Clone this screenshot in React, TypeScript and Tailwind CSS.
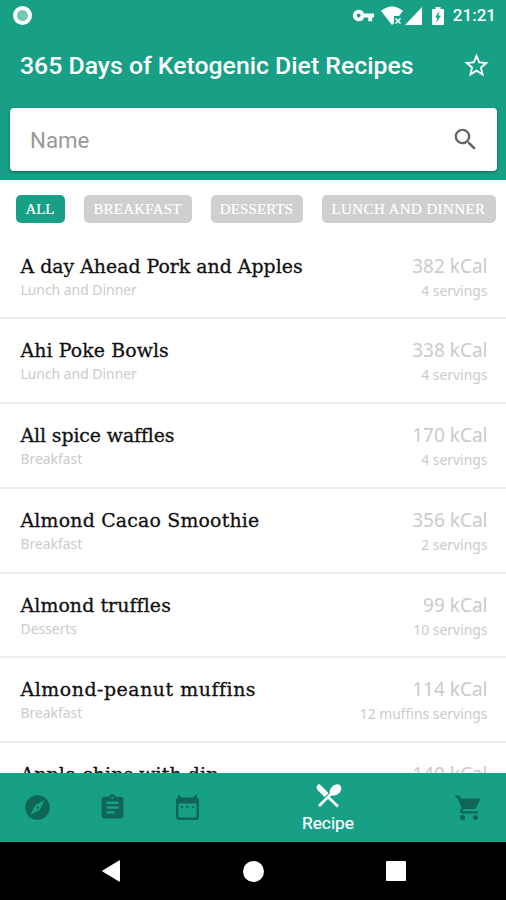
import {
  MdAssignment,
  MdSearch,
  MdStarBorder,
  MdVpnKey,
} from 'react-icons/md';

const categories = [
  { label: 'ALL', className: 'w-[49px] bg-[#17a086] tracking-[-0.1px]' },
  { label: 'BREAKFAST', className: 'w-[108px] bg-[#cfcfcf] tracking-[0.2px]' },
  { label: 'DESSERTS', className: 'w-[92px] bg-[#cfcfcf] tracking-[0.1px]' },
  { label: 'LUNCH AND DINNER', className: 'w-[174px] bg-[#cfcfcf] tracking-[0.4px]' },
];

const recipes = [
  { name: 'A day Ahead Pork and Apples', category: 'Lunch and Dinner', kcal: 382, servings: '4 servings' },
  { name: 'Ahi Poke Bowls', category: 'Lunch and Dinner', kcal: 338, servings: '4 servings', tracking: 'tracking-[0.1px]' },
  { name: 'All spice waffles', category: 'Breakfast', kcal: 170, servings: '4 servings', tracking: 'tracking-[-0.1px]' },
  { name: 'Almond Cacao Smoothie', category: 'Breakfast', kcal: 356, servings: '2 servings', tracking: 'tracking-[0.2px]' },
  { name: 'Almond truffles', category: 'Desserts', kcal: 99, servings: '10 servings', tracking: 'tracking-[0.1px]' },
  { name: 'Almond-peanut muffins', category: 'Breakfast', kcal: 114, servings: '12 muffins servings', tracking: 'tracking-[0.55px]' },
  { name: 'Apple chips with dip', category: 'Desserts', kcal: 140, servings: '4 servings', tracking: 'tracking-[0.1px]' },
];

function StatusBar() {
  return (
    <div className="flex h-[31px] items-center pl-[13px] pr-[10px] text-white">
      <div className="size-[19px] rounded-full border-4 border-white bg-[#74c6b5]" />
      <div className="ml-auto flex items-center">
        <MdVpnKey className="size-[23px]" />
        <svg className="ml-[6px] h-[19px] w-[23px]" viewBox="0 0 23 19">
          <path d="M0 5Q11-4 22 5L18 10H13V17L11 19Z" fill="currentColor" />
          <path d="M14.5 12.5L19.5 17.5M19.5 12.5L14.5 17.5" stroke="currentColor" strokeWidth="1.6" />
        </svg>
        <svg className="ml-px h-[18px] w-[17px]" viewBox="0 0 17 18">
          <path d="M17 0V18H0Z" fill="currentColor" />
        </svg>
        <svg className="ml-[10px] h-[18px] w-[12px]" viewBox="0 0 12 18">
          <path d="M3.5 0H8.5V2H11Q12 2 12 3V17Q12 18 11 18H1Q0 18 0 17V3Q0 2 1 2H3.5Z" fill="currentColor" />
          <path d="M7.5 4L3 10.5H5.3L4.3 15.5L9 8.8H6.5Z" fill="#17a086" />
        </svg>
        <span className="ml-[9px] text-[17px] font-medium leading-none">21:21</span>
      </div>
    </div>
  );
}

function Header() {
  return (
    <header className="h-[180px] shrink-0 bg-[#17a086]">
      <StatusBar />
      <div className="flex h-[77px] items-center justify-between pl-5 pr-[15px] pb-[8px] text-white">
        <h1 className="whitespace-nowrap pt-px text-[24.8px] font-medium">365 Days of Ketogenic Diet Recipes</h1>
        <MdStarBorder className="size-[29px]" />
      </div>
      <div className="ml-[10px] mr-[9px] flex h-[62.5px] items-center justify-between rounded-[4px] bg-white pl-5 pr-[17px] shadow-[0_1px_3px_rgba(0,70,55,0.6)]">
        <span className="pt-[3px] text-[22.3px] text-[#999]">Name</span>
        <MdSearch className="size-[29px] text-[#666]" />
      </div>
    </header>
  );
}

function RecipeRow({ name, category, kcal, servings, tracking = '' }: (typeof recipes)[number]) {
  return (
    <li className="flex h-[84.8px] shrink-0 justify-between border-b-2 border-[#ececec] pl-[20.5px] pr-[18.5px] pt-[17px] font-['Noto_Sans'] text-[#cbcbcb]">
      <div>
        <h2 className={`whitespace-nowrap font-['DejaVu_Serif'] text-[18.9px] leading-[28px] text-[#111] [-webkit-text-stroke:0.3px] ${tracking}`}>{name}</h2>
        <p className="text-[13.9px] leading-5">{category}</p>
      </div>
      <div className="text-right">
        <p className="text-[19px] leading-[29px]">{kcal} kCal</p>
        <p className="text-[13.9px] leading-5">{servings}</p>
      </div>
    </li>
  );
}

function CompassIcon() {
  return (
    <svg className="size-[29px]" viewBox="0 0 29 29">
      <circle cx="14.5" cy="14.5" r="12.3" fill="currentColor" />
      <path d="M21.5 7L17 16.5L7.5 22L12 12.5Z" fill="#17a086" />
      <circle cx="14.5" cy="14.5" r="1.3" fill="currentColor" />
    </svg>
  );
}

function CalendarIcon() {
  return (
    <svg className="size-[29px]" viewBox="0 0 29 29" fill="currentColor">
      <path
        fillRule="evenodd"
        d="M5 2H6.5L9 4.5H20L22.5 2H24V4.5Q26 5 26 7V24Q26 27 23 27H6Q3 27 3 24V7Q3 5 5 4.5ZM5.5 10.5V23Q5.5 24.5 7 24.5H22Q23.5 24.5 23.5 23V10.5Z"
      />
      <path d="M8 13H10V15H8ZM13.5 13H15.5V15H13.5ZM19 13H21V15H19Z" />
    </svg>
  );
}

function CutleryIcon() {
  return (
    <svg className="size-[29px]" viewBox="0 0 29 29" fill="currentColor">
      <path d="M3.5 3Q5 1.5 7 3.5L14.5 11L10.5 15L4 8.5Q1.5 5.5 3.5 3Z" />
      <ellipse cx="21.5" cy="8" rx="6.5" ry="4.8" transform="rotate(-42 21.5 8)" />
      <path d="M17.5 11.5L5 24M13 14L24 24.5" stroke="currentColor" strokeWidth="2.7" />
    </svg>
  );
}

function CartIcon() {
  return (
    <svg className="size-[29px]" viewBox="0 0 29 29" fill="currentColor">
      <path d="M1.5 2.5H5.5L7 5.5H26.5L21.5 16H9.5L8.5 18.3H24V20.5H7Q5.5 20 6 18L7.5 15L3.5 5H1.5Z" />
      <circle cx="8.5" cy="24.5" r="2.5" />
      <circle cx="21.5" cy="24.5" r="2.5" />
    </svg>
  );
}

function BottomNav() {
  return (
    <nav className="flex h-[69.5px] shrink-0 items-center bg-[#17a086] text-[#0f6657]">
      <div className="flex w-[75px] justify-center"><CompassIcon /></div>
      <div className="flex w-[75px] justify-center"><MdAssignment className="size-[29px]" /></div>
      <div className="flex w-[75px] justify-center"><CalendarIcon /></div>
      <div className="flex w-[206px] flex-col items-center pt-[2px] text-white">
        <CutleryIcon />
        <span className="text-[17.3px] leading-[24px] [-webkit-text-stroke:0.2px]">Recipe</span>
      </div>
      <div className="flex w-[75px] justify-center"><CartIcon /></div>
    </nav>
  );
}

export default function App() {
  return (
    <div className="flex h-[900px] w-[506px] flex-col overflow-hidden bg-white font-[Roboto,sans-serif]">
      <Header />
      <div className="flex h-[54.5px] shrink-0 gap-[19px] pl-[15.5px] pt-[15px]">
        {categories.map(({ label, className }) => (
          <div
            key={label}
            className={`flex h-[28px] shrink-0 items-center justify-center whitespace-nowrap rounded-[5px] font-['Liberation_Serif'] text-[15px] text-white [-webkit-text-stroke:0.2px] ${className}`}
          >
            {label}
          </div>
        ))}
      </div>
      <ul className="flex min-h-0 flex-1 flex-col overflow-hidden">
        {recipes.map((recipe) => (
          <RecipeRow key={recipe.name} {...recipe} />
        ))}
      </ul>
      <BottomNav />
      <div className="flex h-[58px] shrink-0 items-center bg-black pl-[102px] text-white">
        <svg className="h-[22px] w-[18px]" viewBox="0 0 18 22">
          <path d="M18 1V21Q18 22 17 21.5L.5 11.5Q0 11 .5 10.5L17 .5Q18 0 18 1Z" fill="currentColor" />
        </svg>
        <div className="ml-[123px] size-[21px] rounded-full bg-white" />
        <div className="ml-[122px] size-5 rounded-[1px] bg-white" />
      </div>
    </div>
  );
}
